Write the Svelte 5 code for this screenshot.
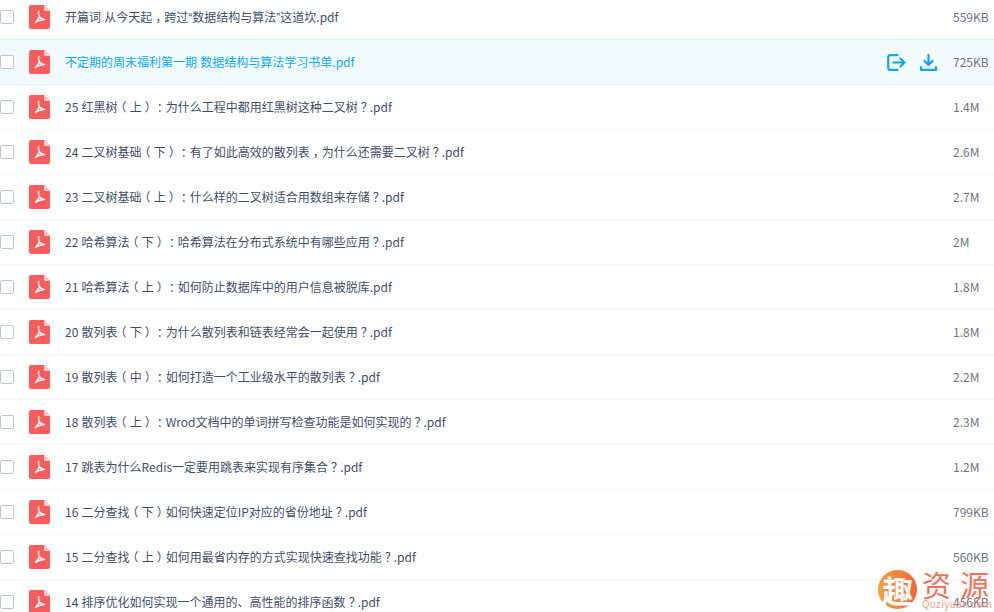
<script>
  const files = [
    { name: '开篇词 从今天起，跨过“数据结构与算法”这道坎.pdf', size: '559KB' },
    { name: '不定期的周末福利第一期 数据结构与算法学习书单.pdf', size: '725KB', active: true },
    { name: '25 红黑树（上）：为什么工程中都用红黑树这种二叉树？.pdf', size: '1.4M' },
    { name: '24 二叉树基础（下）：有了如此高效的散列表，为什么还需要二叉树？.pdf', size: '2.6M' },
    { name: '23 二叉树基础（上）：什么样的二叉树适合用数组来存储？.pdf', size: '2.7M' },
    { name: '22 哈希算法（下）：哈希算法在分布式系统中有哪些应用？.pdf', size: '2M' },
    { name: '21 哈希算法（上）：如何防止数据库中的用户信息被脱库.pdf', size: '1.8M' },
    { name: '20 散列表（下）：为什么散列表和链表经常会一起使用？.pdf', size: '1.8M' },
    { name: '19 散列表（中）：如何打造一个工业级水平的散列表？.pdf', size: '2.2M' },
    { name: '18 散列表（上）：Wrod文档中的单词拼写检查功能是如何实现的？.pdf', size: '2.3M' },
    { name: '17 跳表为什么Redis一定要用跳表来实现有序集合？.pdf', size: '1.2M' },
    { name: '16 二分查找（下）如何快速定位IP对应的省份地址？.pdf', size: '799KB' },
    { name: '15 二分查找（上）如何用最省内存的方式实现快速查找功能？.pdf', size: '560KB' },
    { name: '14 排序优化如何实现一个通用的、高性能的排序函数？.pdf', size: '456KB' }
  ];

  // the reference font centres full-width punctuation and has narrow curly quotes
  const parts = (name) => name.split(/([（）：？，“”])/).filter(Boolean);
  const kind = (p) => ('“”'.includes(p) ? 'quote' : '（）：？，'.includes(p) ? 'punct' : '');
</script>

<main>
  <ul class="list">
    {#each files as file}
      <li class="row" class:active={file.active}>
        <span class="check"></span>
        <svg class="pdf" viewBox="0 0 21 24" width="21" height="24">
          <path d="M2 0H15L21 6V22a2 2 0 0 1-2 2H2a2 2 0 0 1-2-2V2a2 2 0 0 1 2-2z" fill="#fd5c5c" />
          <path d="M15 0L21 6H16.500a1.500 1.500 0 0 1-1.500-1.500z" fill="#fecaca" />
          <path d="M10 6.500c-.9 0 -.6 3 .4 5.200c-.8 2.200-2.200 4-3.900 5.800M10.400 11.700c1 1.700 2.600 2.800 5.100 2.800M6.500 17.500c2.500-1.800 5.300-2.800 9-3" fill="none" stroke="#fff" stroke-width="1.400" stroke-linecap="round" stroke-linejoin="round" />
        </svg>
        <span class="name">{#each parts(file.name) as p}{#if kind(p)}<span class={kind(p)}>{p}</span>{:else}{p}{/if}{/each}</span>
        {#if file.active}
          <span class="actions">
            <svg viewBox="0 0 19 17" width="19" height="17">
              <path d="M10.500 1.200H3.200A2 2 0 0 0 1.200 3.200V13.800A2 2 0 0 0 3.200 15.800H10.500M6.500 8.500H17.500M13.500 4.500L17.500 8.500L13.500 12.500" fill="none" stroke="#06a7ff" stroke-width="2.200" stroke-linecap="round" stroke-linejoin="round" />
            </svg>
            <svg viewBox="0 0 17 17" width="17" height="17">
              <path d="M8.500 1V11M4.500 7L8.500 11L12.500 7M1 13V15.800H16V13" fill="none" stroke="#06a7ff" stroke-width="2.200" stroke-linecap="round" stroke-linejoin="round" />
            </svg>
          </span>
        {/if}
        <span class="size">{file.size}</span>
      </li>
    {/each}
  </ul>

  <div class="mark">
    <span class="badge">趣</span>
    <div class="brand">
      <span class="zh">资源</span>
      <span class="en">Quziyuan.com</span>
    </div>
  </div>
</main>

<style>
  :global(body) {
    margin: 0;
    background: #fff;
    overflow: hidden;
  }

  main {
    position: relative;
    width: 994px;
    height: 612px;
    overflow: hidden;
    font-family: "Noto Sans CJK SC", "Open Sans", sans-serif;
    font-size: 12px;
    color: #424e67;
  }

  .list {
    list-style: none;
    margin: -5px 0 0;
    padding: 0;
  }

  .row {
    display: flex;
    align-items: center;
    height: 44px;
    border-bottom: 1px solid #f2f6fa;
  }

  .row.active {
    background: #f4fbff;
    border-bottom-color: #daf0fd;
    box-shadow: 0 -1px 0 #daf0fd;
    color: #09aaff;
  }

  .check {
    width: 12px;
    height: 12px;
    margin-right: 15px;
    border: 1px solid #b9c6d4;
    border-radius: 2px;
    background: #fff;
    flex: none;
  }

  .pdf {
    flex: none;
    margin-right: 15px;
  }

  .name {
    flex: 1;
    padding-bottom: 2px;
    white-space: nowrap;
    word-spacing: 0.6px;
    text-spacing-trim: space-all;
  }

  .punct {
    font-feature-settings: "halt";
    padding: 0 3px;
  }

  .quote {
    font-family: "Liberation Sans", sans-serif;
  }

  .actions {
    display: flex;
    align-items: center;
    gap: 14px;
    margin-right: 16px;
  }

  .size {
    width: 41px;
    padding-bottom: 2px;
    color: #6c7482;
    white-space: nowrap;
  }

  .mark {
    position: absolute;
    right: 5px;
    bottom: 3px;
    display: flex;
    align-items: center;
    gap: 5px;
  }

  .badge {
    width: 39px;
    height: 39px;
    border-radius: 50%;
    background: linear-gradient(90deg, #f7a13c, #f0653a);
    color: #fff;
    font-size: 31px;
    font-weight: 700;
    line-height: 39px;
    text-align: center;
  }

  .brand {
    display: flex;
    flex-direction: column;
    width: 67px;
    color: #f2715a;
  }

  .zh {
    font-size: 29px;
    line-height: 30px;
    text-align-last: justify;
  }

  .en {
    font-size: 10px;
    line-height: 10px;
    letter-spacing: 0.3px;
    color: #f59a86;
    white-space: nowrap;
  }
</style>
